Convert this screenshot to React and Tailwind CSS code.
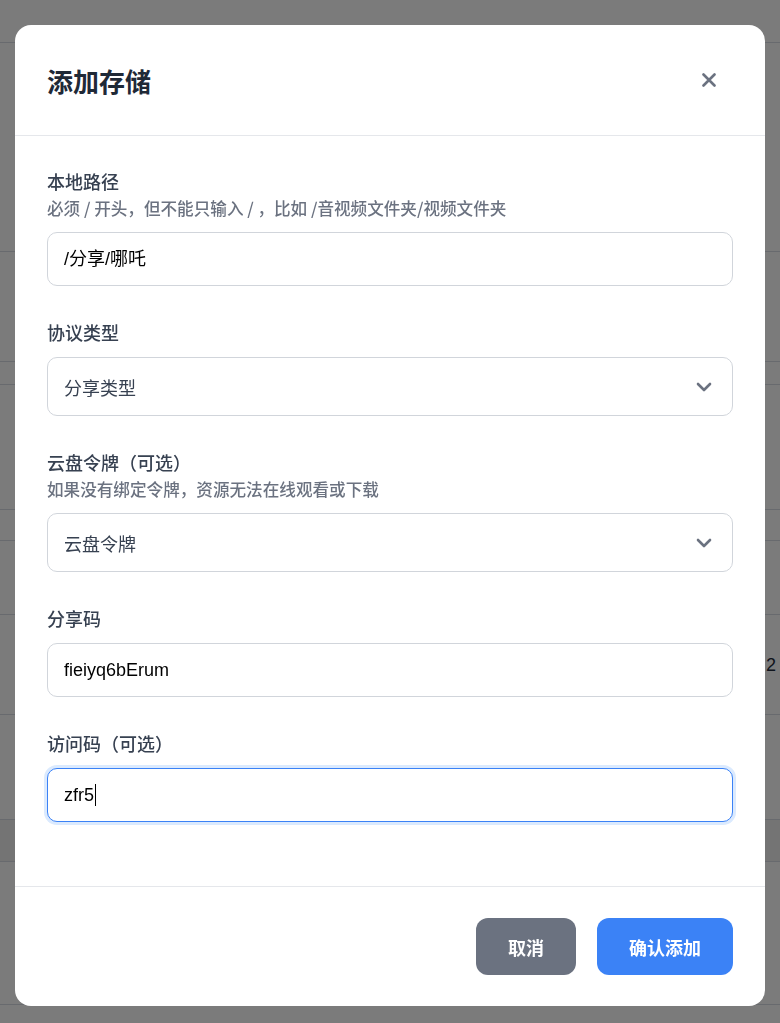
import React from "react";

const cjk = { fontFamily: '"Noto Sans CJK SC", "Noto Sans", sans-serif' };
const inputFont = { fontFamily: '"Liberation Sans", "Noto Sans CJK SC", sans-serif' };

const bgRows = [43, 209, 110, 23, 125, 31, 74, 100, 105, 42, 143];

const Chevron = () => (
  <svg width="24" height="24" viewBox="0 0 20 20" fill="none" className="text-[#6b7280]">
    <path d="M5 7.5l5 5 5-5" stroke="currentColor" strokeWidth="2.2" strokeLinecap="round" strokeLinejoin="round" />
  </svg>
);

const Field = ({ label, hint, children }) => (
  <div className="flex flex-col">
    <div className="mb-[11px]">
      <div className="text-lg leading-7 font-medium text-[#374151]">{label}</div>
      {hint && <div className="text-[16.6px] leading-[26px] font-medium text-[#6b7280]">{hint}</div>}
    </div>
    {children}
  </div>
);

const TextBox = ({ value, focused }) => (
  <div
    className={`h-[54px] flex items-center px-4 rounded-[10px] border bg-white text-lg text-black ${
      focused ? "border-[#3b82f6] ring-[3px] ring-[#dbeafe]" : "border-[#d1d5db]"
    }`}
    style={inputFont}
  >
    {value}
    {focused && <span className="inline-block w-px h-[22px] bg-black ml-px" />}
  </div>
);

const SelectBox = ({ placeholder }) => (
  <div className="h-[59px] flex items-center justify-between pl-4 pr-4 rounded-[10px] border border-[#d1d5db] bg-white">
    <span className="text-lg text-[#374151]">{placeholder}</span>
    <Chevron />
  </div>
);

export default function App() {
  return (
    <div className="relative min-h-screen bg-[#f6f6f6] overflow-hidden" style={cjk}>
      {/* page behind the dialog */}
      <div className="flex flex-col">
        {bgRows.map((h, i) => (
          <div
            key={i}
            className={`border-b border-gray-300 flex items-center justify-end ${i === 9 ? "bg-[#e9e9e9]" : ""}`}
            style={{ height: h }}
          >
            {i === 7 && <span className="text-lg text-gray-800 mr-[4px]" style={inputFont}>12:2</span>}
          </div>
        ))}
      </div>

      <div className="fixed inset-0 bg-black/50 flex justify-center items-start pt-[25px]">
        <div className="w-[750px] bg-white rounded-2xl flex flex-col">
          <div className="h-[111px] flex items-center justify-between px-8 border-b border-[#e5e7eb]">
            <h2 className="text-[26px] font-bold text-[#1f2937]">添加存储</h2>
            <button className="w-8 h-8 flex items-center justify-center text-[#6b7280] mr-[8px]">
              <svg width="14" height="14" viewBox="0 0 14 14" fill="none">
                <path d="M1.5 1.5l11 11M12.5 1.5l-11 11" stroke="currentColor" strokeWidth="2.6" strokeLinecap="round" />
              </svg>
            </button>
          </div>

          <div className="px-8 pt-[31px] pb-16 flex flex-col gap-8">
            <Field label="本地路径" hint="必须 / 开头，但不能只输入 / ，比如 /音视频文件夹/视频文件夹">
              <TextBox value="/分享/哪吒" />
            </Field>
            <Field label="协议类型">
              <SelectBox placeholder="分享类型" />
            </Field>
            <Field label="云盘令牌（可选）" hint="如果没有绑定令牌，资源无法在线观看或下载">
              <SelectBox placeholder="云盘令牌" />
            </Field>
            <Field label="分享码">
              <TextBox value="fieiyq6bErum" />
            </Field>
            <Field label="访问码（可选）">
              <TextBox value="zfr5" focused />
            </Field>
          </div>

          <div className="border-t border-[#e5e7eb] px-8 pt-[31px] pb-[31px] flex justify-end gap-[21px]">
            <button className="h-[57px] px-8 rounded-xl bg-[#6b7280] text-white text-lg font-bold">取消</button>
            <button className="h-[57px] px-8 rounded-xl bg-[#3b82f6] text-white text-lg font-bold">确认添加</button>
          </div>
        </div>
      </div>
    </div>
  );
}
